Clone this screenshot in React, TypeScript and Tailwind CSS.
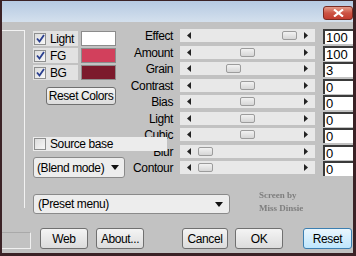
const sliders = [
  { label: "Effect", pos: 102, value: "100" },
  { label: "Amount", pos: 60, value: "100" },
  { label: "Grain", pos: 46, value: "3" },
  { label: "Contrast", pos: 60, value: "0" },
  { label: "Bias", pos: 60, value: "0" },
  { label: "Light", pos: 60, value: "0" },
  { label: "Cubic", pos: 60, value: "0" },
  { label: "Blur", pos: 18, value: "0" },
  { label: "Contour", pos: 18, value: "0" },
];

const swatches = [
  { label: "Light", color: "bg-white" },
  { label: "FG", color: "bg-[#d2405c]" },
  { label: "BG", color: "bg-[#7c1a2c]" },
];

const Check = ({ checked }: { checked: boolean }) => (
  <span className="w-[12px] h-[12px] border border-[#8e8f8f] bg-linear-to-br from-[#dcdcdc] to-[#f8f8f8] flex items-center justify-center shrink-0">
    {checked && (
      <svg width="9" height="9" viewBox="0 0 9 9">
        <path d="M1 4.5 L3.5 7.5 L8 1" fill="none" stroke="#2a3f8f" strokeWidth="1.8" />
      </svg>
    )}
  </span>
);

const Arrow = () => (
  <svg width="8" height="5" viewBox="0 0 8 5" className="shrink-0">
    <path d="M0 0 L8 0 L4 5 Z" fill="#111" />
  </svg>
);

const Button = ({ label, width, primary }: { label: string; width: string; primary?: boolean }) => (
  <button
    className={`${width} h-[21px] rounded-[3px] border text-black flex items-center justify-center ${
      primary
        ? "border-[#3c7fb1] bg-linear-to-b from-[#eaf6fd] to-[#bee6fd]"
        : "border-[#707070] bg-linear-to-b from-[#f4f4f4] to-[#dcdcdc]"
    }`}
  >
    {label}
  </button>
);

export default function App() {
  return (
    <div className="w-[356px] h-[256px] bg-[#3b2226] pl-[2px] pr-[3px] pt-[1px] pb-[3px] overflow-hidden whitespace-nowrap font-['Liberation_Sans',Arial,sans-serif] text-[12px] tracking-[-0.4px] leading-none">
      <div className="h-full w-full flex flex-col bg-[#c2c2c2]">
        <div className="h-[21px] shrink-0 bg-linear-to-b from-[#b5c9e2] to-[#d4e0ed] flex justify-end pt-[5px]">
          <div className="w-[30px] h-[14px] rounded-[3px] border border-[#7a2a22] bg-linear-to-b from-[#e39a8a] via-[#cc5445] to-[#c23c30] flex items-center justify-center">
            <svg width="11" height="8" viewBox="0 0 11 8">
              <path d="M1 0.5 L10 7.5 M10 0.5 L1 7.5" stroke="white" strokeWidth="2.2" />
            </svg>
          </div>
        </div>

        <div className="flex-1 flex">
          {/* left gutter */}
          <div className="w-[31px] shrink-0 flex flex-col">
            <div className="mt-[8px] h-[178px] w-[23px] border-t border-r border-[#f2f2f2]" />
            <div className="mt-[24px] h-[17px] w-[29px] border-t border-[#a9a9a9] border-b border-r border-b-[#f0f0f0] border-r-[#f0f0f0]" />
          </div>

          <div className="flex-1 flex flex-col">
            <div className="flex pt-[7px]">
              {/* left controls */}
              <div className="w-[92px] shrink-0 flex flex-col pt-[2px]">
                <div className="flex flex-col gap-[2px]">
                  {swatches.map((s) => (
                    <div key={s.label} className="flex items-center h-[15px]">
                      <div className="w-[45px] h-[15px] bg-[#e2e2e2] flex items-center gap-[4px] pl-[1px]">
                        <Check checked />
                        <span>{s.label}</span>
                      </div>
                      <div className={`ml-[3px] w-[35px] h-[15px] border border-[#8c8c8c] ${s.color}`} />
                    </div>
                  ))}
                </div>
                <div className="mt-[7px] ml-[13px] w-[70px] h-[18px] rounded-[3px] border border-[#707070] bg-linear-to-b from-[#f4f4f4] to-[#dcdcdc] flex items-center justify-center">
                  Reset Colors
                </div>
                <div className="relative z-10 mt-[32px] w-[134px] h-[14px] bg-[#ececec] flex items-center gap-[4px] pl-[1px]">
                  <Check checked={false} />
                  <span>Source base</span>
                </div>
                <div className="mt-[6px] w-[92px] h-[21px] rounded-[3px] border border-[#8a8a8a] bg-[#ededed] flex items-center justify-between pl-[3px] pr-[5px]">
                  <span>(Blend mode)</span>
                  <Arrow />
                </div>
              </div>

              {/* sliders */}
              <div className="flex-1 flex flex-col">
                {sliders.map((s) => (
                  <div key={s.label} className="h-[16.5px] flex items-start">
                    <span className="flex-1 pr-[7px] h-[14px] flex items-center justify-end">{s.label}</span>
                    <div className="relative w-[135px] h-[13px] bg-[#e8e8e8] flex items-center justify-between px-[7px]">
                      <svg width="4" height="7" viewBox="0 0 4 7">
                        <path d="M4 0 L0 3.5 L4 7 Z" fill="#222" />
                      </svg>
                      <svg width="4" height="7" viewBox="0 0 4 7">
                        <path d="M0 0 L4 3.5 L0 7 Z" fill="#222" />
                      </svg>
                      <div
                        className="absolute top-[2px] w-[15px] h-[9px] rounded-[2px] border border-[#9c9c9c] bg-linear-to-b from-[#f2f2f2] to-[#d6d6d6]"
                        style={{ left: s.pos }}
                      />
                    </div>
                    <div className="ml-[8px] w-[30px] h-[15px] bg-white border-t-2 border-l-2 border-[#3a3a3a] pl-[1px] flex items-center text-[13px] tracking-normal">
                      {s.value}
                    </div>
                  </div>
                ))}
              </div>
            </div>

            {/* preset row */}
            <div className="flex items-start mt-[13px]">
              <div className="mt-[3px] w-[197px] h-[20px] rounded-[3px] border border-[#8a8a8a] bg-[#ededed] flex items-center justify-between pl-[4px] pr-[6px]">
                <span>(Preset menu)</span>
                <Arrow />
              </div>
              <div className="ml-[29px] flex flex-col gap-[4px] text-[9px] font-bold tracking-normal text-[#7e7e7e] blur-[0.4px] font-['Liberation_Serif',serif]">
                <span>Screen by</span>
                <span>Miss Dinsie</span>
              </div>
            </div>

            {/* buttons */}
            <div className="flex items-center mt-[14px]">
              <div className="ml-[7px]">
                <Button label="Web" width="w-[48px]" />
              </div>
              <div className="ml-[8px]">
                <Button label="About..." width="w-[48px]" />
              </div>
              <div className="ml-[38px]">
                <Button label="Cancel" width="w-[46px]" />
              </div>
              <div className="ml-[7px]">
                <Button label="OK" width="w-[48px]" />
              </div>
              <div className="ml-[20px]">
                <Button label="Reset" width="w-[49px]" primary />
              </div>
            </div>
          </div>
        </div>
      </div>
    </div>
  );
}
